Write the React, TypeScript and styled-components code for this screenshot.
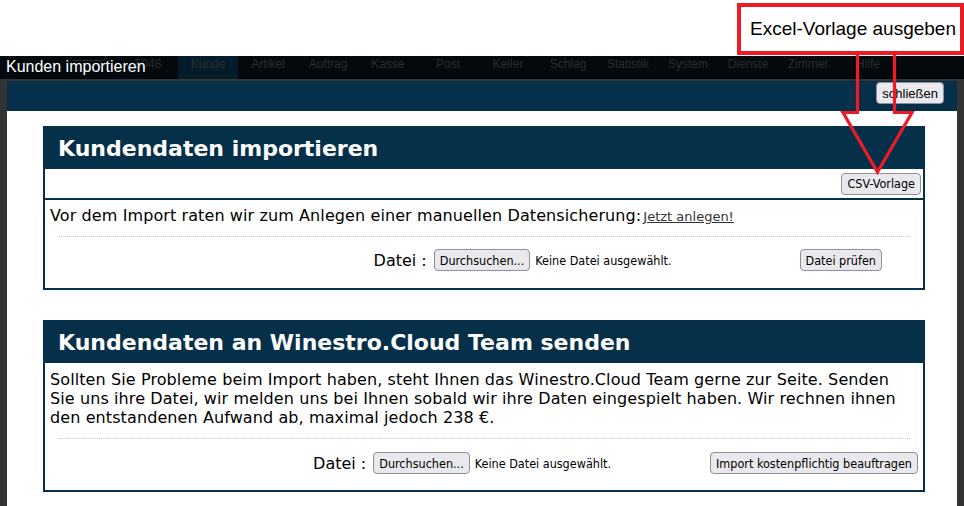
import styled, { createGlobalStyle } from "styled-components";

const NAVY = "#063049";

const GlobalStyle = createGlobalStyle`
  html, body {
    margin: 0;
    padding: 0;
    background: #fff;
    overflow: hidden;
  }
`;

const navItems = [
  "5048",
  "Kunde",
  "Artikel",
  "Auftrag",
  "Kasse",
  "Post",
  "Keller",
  "Schlag",
  "Statistik",
  "System",
  "Dienste",
  "Zimmer",
  "Hilfe",
];

const App = () => {
  return (
    <Page>
      <GlobalStyle />
      <TopStrip />
      <NavBar>
        <SearchStub />
        {navItems.map((item) => (
          <NavItem key={item} $active={item === "Kunde"}>
            {item}
          </NavItem>
        ))}
      </NavBar>
      <Frame>
        <Band>
          <Button $size={13}>schließen</Button>
        </Band>
        <Content>
          <Panel>
            <PanelHeader>Kundendaten importieren</PanelHeader>
            <PanelTools>
              <Button>CSV-Vorlage</Button>
            </PanelTools>
            <PanelBody $top={6}>
              Vor dem Import raten wir zum Anlegen einer manuellen
              Datensicherung:<SmallLink href="#">Jetzt anlegen!</SmallLink>
            </PanelBody>
            <Dotted $top={10} />
            <FileRow $right={41} $top={11} $bottom={16}>
              <FileLabel>Datei :</FileLabel>
              <Button>Durchsuchen...</Button>
              <NoFile>Keine Datei ausgewählt.</NoFile>
              <ActionSlot $gap={128}>
                <Button>Datei prüfen</Button>
              </ActionSlot>
            </FileRow>
          </Panel>

          <Panel>
            <PanelHeader>Kundendaten an Winestro.Cloud Team senden</PanelHeader>
            <PanelBody $top={7}>
              Sollten Sie Probleme beim Import haben, steht Ihnen das
              Winestro.Cloud Team gerne zur Seite. Senden
              <br />
              Sie uns ihre Datei, wir melden uns bei Ihnen sobald wir ihre Daten
              eingespielt haben. Wir rechnen ihnen
              <br />
              den entstandenen Aufwand ab, maximal jedoch 238 €.
            </PanelBody>
            <Dotted $top={11} />
            <FileRow $right={5} $top={12} $bottom={15}>
              <FileLabel>Datei :</FileLabel>
              <Button>Durchsuchen...</Button>
              <NoFile>Keine Datei ausgewählt.</NoFile>
              <ActionSlot $gap={99}>
                <Button>Import kostenpflichtig beauftragen</Button>
              </ActionSlot>
            </FileRow>
          </Panel>
        </Content>
      </Frame>

      <DialogTitle>Kunden importieren</DialogTitle>
      <Callout>Excel-Vorlage ausgeben</Callout>
      <CalloutArrow width="90" height="125" viewBox="0 0 90 125">
        <path
          d="M15.5 0 V57.5 H1 L35.5 117 L70 57.5 H52.5 V0"
          fill="none"
          stroke="#ed1c24"
          strokeWidth="3.2"
          strokeLinejoin="miter"
        />
      </CalloutArrow>
    </Page>
  );
};

export default App;

const Page = styled.div`
  position: relative;
  width: 964px;
  height: 506px;
  overflow: hidden;
  background: #fff;
  display: flex;
  flex-direction: column;
  font-family: "DejaVu Sans", Verdana, sans-serif;
`;

const TopStrip = styled.div`
  height: 56px;
  flex: none;
`;

const NavBar = styled.div`
  height: 23px;
  flex: none;
  display: flex;
  align-items: stretch;
  padding-left: 70px;
  background: #03090d;
`;

const SearchStub = styled.div`
  width: 34px;
  height: 4px;
  margin-right: 12px;
  border: 1px solid #2c2c2c;
  border-top: none;
  border-radius: 0 0 5px 5px;
`;

const NavItem = styled.div<{ $active?: boolean }>`
  width: 60px;
  text-align: center;
  padding-top: 1px;
  font-family: "Liberation Sans", Arial, sans-serif;
  font-size: 12px;
  line-height: 14px;
  color: #2a2d2f;
  background: ${(p) => (p.$active ? "#041c29" : "transparent")};
`;

const Frame = styled.div`
  flex: 1;
  display: flex;
  flex-direction: column;
  background: #333333;
  padding: 2px 7px 0;
`;

const Band = styled.div`
  height: 30px;
  flex: none;
  display: flex;
  justify-content: flex-end;
  align-items: flex-start;
  padding: 1px 13px 0 0;
  box-sizing: border-box;
  background: ${NAVY};
`;

const Content = styled.div`
  flex: 1;
  display: flex;
  flex-direction: column;
  gap: 30px;
  padding: 15px 32px 0 36px;
  background: #fff;
`;

const Panel = styled.section`
  border: 2px solid ${NAVY};
  display: flex;
  flex-direction: column;
`;

const PanelHeader = styled.h2`
  margin: 0;
  height: 41px;
  display: flex;
  align-items: center;
  padding-left: 13px;
  background: ${NAVY};
  color: #fff;
  font-family: "DejaVu Sans", Verdana, sans-serif;
  font-size: 22px;
  font-weight: bold;
`;

const PanelTools = styled.div`
  height: 29px;
  display: flex;
  justify-content: flex-end;
  align-items: center;
  padding-right: 2px;
  border-bottom: 2px solid ${NAVY};
`;

const PanelBody = styled.p<{ $top: number }>`
  margin: 0;
  padding: ${(p) => p.$top}px 5px 0;
  font-size: 16px;
  line-height: 19px;
  letter-spacing: 0.1px;
  color: #000;
`;

const SmallLink = styled.a`
  font-size: 13px;
  letter-spacing: 0;
  color: #333;
  text-decoration: underline;
  margin-left: 2px;
`;

const Dotted = styled.hr<{ $top: number }>`
  margin: ${(p) => p.$top}px 13px 0 14px;
  border: none;
  border-top: 1px dotted #c4c4c4;
  height: 0;
`;

const FileRow = styled.div<{
  $right: number;
  $top: number;
  $bottom: number;
}>`
  display: flex;
  align-items: center;
  justify-content: flex-end;
  height: 24px;
  margin-top: ${(p) => p.$top}px;
  padding: 0 ${(p) => p.$right}px ${(p) => p.$bottom}px 0;
`;

const FileLabel = styled.span`
  font-size: 16px;
  margin-right: 7px;
  color: #000;
`;

const NoFile = styled.span`
  font-family: "DejaVu Sans Condensed", "DejaVu Sans", sans-serif;
  font-stretch: condensed;
  font-size: 12.5px;
  margin-left: 5px;
  color: #000;
`;

const ActionSlot = styled.div<{ $gap: number }>`
  margin-left: ${(p) => p.$gap}px;
  display: flex;
`;

const Button = styled.button<{ $size?: number }>`
  height: 22px;
  padding: 0 5px;
  background: #e9e9ed;
  border: 1px solid #8f8f9d;
  border-radius: 4px;
  font-family: ${(p) =>
    p.$size
      ? `"Liberation Sans", Arial, sans-serif`
      : `"DejaVu Sans Condensed", "DejaVu Sans", sans-serif`};
  font-stretch: condensed;
  font-size: ${(p) => p.$size ?? 12.5}px;
  color: #000;
  cursor: pointer;
  white-space: nowrap;
`;

const DialogTitle = styled.div`
  position: absolute;
  left: 6px;
  top: 58px;
  font-family: "Liberation Sans", Arial, sans-serif;
  font-size: 16px;
  color: #fff;
`;

const Callout = styled.div`
  position: absolute;
  left: 737px;
  top: 3px;
  width: 227px;
  height: 52px;
  box-sizing: border-box;
  border: 4px solid #ed1c24;
  background: #fff;
  padding-left: 9px;
  display: flex;
  align-items: center;
  font-family: "Liberation Sans", Arial, sans-serif;
  font-size: 19px;
  color: #000;
`;

const CalloutArrow = styled.svg`
  position: absolute;
  left: 842px;
  top: 55px;
  overflow: visible;
`;
